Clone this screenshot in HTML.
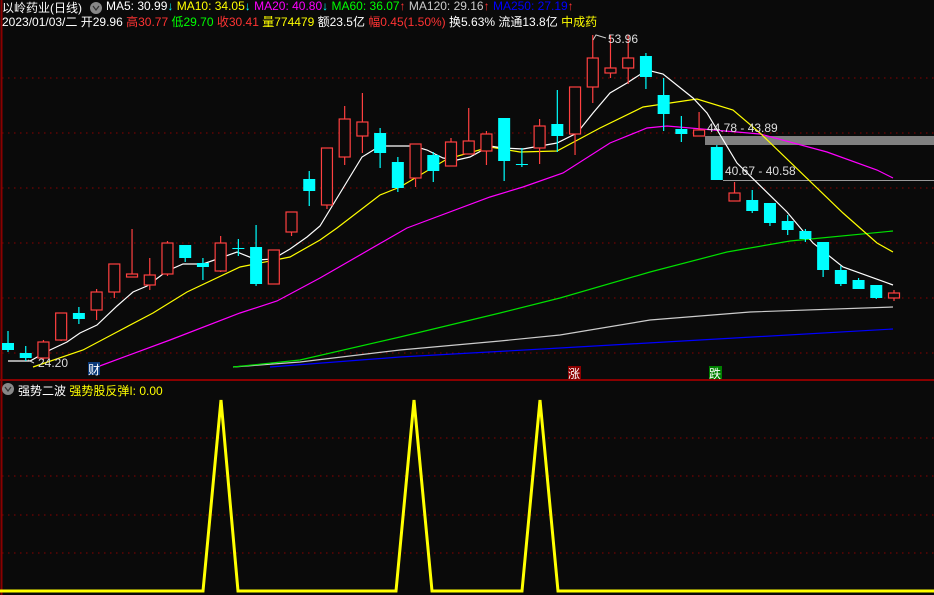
<!DOCTYPE html><html><head><meta charset="utf-8"><style>
body{margin:0;background:#0a0a0a;width:934px;height:595px;overflow:hidden;font-family:"Liberation Sans","Noto Sans CJK SC",sans-serif}
svg{position:absolute;left:0;top:0}
.t{position:absolute;font-size:12px;white-space:nowrap;color:#ddd}
</style></head><body>
<svg width="934" height="595">
<rect width="934" height="595" fill="#0a0a0a"/>
<line x1="1.5" y1="0" x2="1.5" y2="595" stroke="#8b0000" stroke-width="2"/>
<g stroke="#8b0000" stroke-dasharray="1.5,4.5">
<line x1="2" y1="78" x2="934" y2="78"/><line x1="2" y1="133" x2="934" y2="133"/><line x1="2" y1="188" x2="934" y2="188"/><line x1="2" y1="243" x2="934" y2="243"/><line x1="2" y1="298" x2="934" y2="298"/><line x1="2" y1="353" x2="934" y2="353"/>
<line x1="2" y1="438" x2="934" y2="438"/><line x1="2" y1="476" x2="934" y2="476"/><line x1="2" y1="515" x2="934" y2="515"/><line x1="2" y1="553" x2="934" y2="553"/>
</g>
<line x1="0" y1="380" x2="934" y2="380" stroke="#8b0000" stroke-width="2"/>
<rect x="705" y="136" width="229" height="9" fill="#808080"/>
<line x1="723" y1="180.5" x2="934" y2="180.5" stroke="#999"/>
<g fill="none" stroke-width="1.2">
<polyline stroke="#0000ff" points="270,367 400,357 560,348 700,340 893,329"/>
<polyline stroke="#ccc" points="233,367 300,362 400,350 500,341 560,335 650,320 750,312 893,307"/>
<polyline stroke="#00e000" points="233,367 300,360 400,337 500,313 560,298 650,272 727,252 790,241 893,231"/>
<polyline stroke="#ff00ff" points="97,367 170,340 240,313 277,301 320,278 407,228 490,197 523,187 563,173 610,143 647,128 667,126 760,134 827,152 877,170 893,178"/>
<polyline stroke="#ffff00" points="33,367 83,350 117,332 153,313 187,292 240,267 290,257 320,240 337,228 380,195 400,187 447,159 490,147 520,152 557,151 600,128 643,107 697,99 733,110 760,133 843,213 877,243 893,252"/>
<polyline stroke="#fff" points="8,361 30,361 50,350 67,342 80,333 97,325 117,306 133,292 147,286 167,271 183,264 203,264 223,257 237,252 257,260 273,259 290,249 307,237 320,226 362,157 380,146 413,146 427,150 443,158 457,160 470,157 490,146 503,148 523,149 557,143 577,133 593,113 610,93 627,83 647,70 663,74 693,98 707,113 737,163 787,212 813,243 843,267 893,285"/>
</g>
<g id="c" stroke-width="1.2"></g>
<polyline fill="none" stroke="#ffff00" stroke-width="3" points="0,591 203,591 221,400 238,591 396,591 414,400 432,591 522,591 540,400 558,591 934,591"/>
<rect x="88" y="362" width="12" height="13" fill="#0a3a7a"/>
<rect x="568" y="366" width="13" height="13" fill="#8b0000"/>
<rect x="709" y="366" width="13" height="13" fill="#008000"/>
<circle cx="96" cy="8" r="6" fill="#888"/><circle cx="8" cy="389" r="6" fill="#888"/>
<polyline points="93,6 96,10 99,6" fill="none" stroke="#333" stroke-width="1.2"/>
<polyline points="5,387 8,391 11,387" fill="none" stroke="#333" stroke-width="1.2"/>
<polyline points="593,40 596,35 606,38" fill="none" stroke="#ccc"/>
<polyline points="28,360 34,363" fill="none" stroke="#ccc"/>
</svg>
<div class="t" style="left:2px;top:-1px;font-size:12px;color:#fff">以岭药业(日线)</div>
<div class="t" style="left:106px;top:-1px;color:#fff">MA5: 30.99<span style="color:#0ff">↓</span> <span style="color:#ff0">MA10: 34.05<span style="color:#0ff">↓</span></span> <span style="color:#f0f">MA20: 40.80<span style="color:#0ff">↓</span></span> <span style="color:#0f0">MA60: 36.07<span style="color:#f33">↑</span></span> <span style="color:#ccc">MA120: 29.16<span style="color:#f33">↑</span></span> <span style="color:#00f">MA250: 27.19<span style="color:#f33">↑</span></span></div>
<div class="t" style="left:2px;top:13px;color:#fff">2023/01/03/二 开29.96 <span style="color:#f33">高30.77</span> <span style="color:#0f0">低29.70</span> <span style="color:#f33">收30.41</span> <span style="color:#ff0">量774479</span> 额23.5亿 <span style="color:#f33">幅0.45(1.50%)</span> 换5.63% 流通13.8亿 <span style="color:#ff0">中成药</span></div>
<div class="t" style="left:608px;top:32px">53.96</div>
<div class="t" style="left:707px;top:121px">44.78 - 43.89</div>
<div class="t" style="left:725px;top:164px">40.67 - 40.58</div>
<div class="t" style="left:38px;top:356px">24.20</div>
<div class="t" style="left:88px;top:361px;color:#fff">财</div>
<div class="t" style="left:568px;top:365px;color:#fff">涨</div>
<div class="t" style="left:709px;top:365px;color:#fff">跌</div>
<div class="t" style="left:18px;top:382px;color:#fff">强势二波 <span style="color:#ff0">强势股反弹I: 0.00</span></div>
<script>
var d=[[1,343,350,331,352],[1,353,358,346,361],[0,342,358,340,360],[0,313,340,313,341],[1,313,319,307,324],[0,292,310,289,320],[0,264,292,264,298],[0,274,277,229,277],[0,275,285,258,290],[0,243,274,241,276],[1,245,258,245,262],[1,263,267,258,280],[0,243,271,236,272],[1,248,248,239,256],[1,247,284,225,286],[0,250,284,250,284],[0,212,232,212,236],[1,179,191,171,206],[0,148,205,148,209],[0,119,157,106,165],[0,122,136,93,153],[1,133,153,128,168],[1,162,188,157,192],[0,144,178,144,187],[1,155,171,152,182],[0,142,166,138,166],[0,141,154,108,154],[0,134,151,131,165],[1,118,161,118,181],[1,164,164,148,167],[0,126,148,119,164],[1,124,136,90,152],[0,87,134,87,155],[0,58,87,35,103],[0,68,73,35,78],[0,58,68,35,84],[1,56,77,53,89],[1,95,114,78,131],[1,129,134,116,142],[0,130,136,112,136],[1,147,180,145,180],[0,193,201,182,201],[1,200,211,190,213],[1,203,223,203,226],[1,221,230,215,235],[1,231,239,229,242],[1,242,270,242,277],[1,270,284,266,286],[1,280,289,278,289],[1,285,298,285,299],[0,293,298,290,301]];
var g=document.getElementById('c'),s='';
d.forEach(function(c,i){var x=8+17.72*i,col=c[0]?'#00ffff':'#ff4040';
s+='<line x1="'+x+'" x2="'+x+'" y1="'+c[3]+'" y2="'+c[4]+'" stroke="'+col+'"/>';
var h=Math.max(c[2]-c[1],1);
if(c[0])s+='<rect x="'+(x-6)+'" y="'+c[1]+'" width="12" height="'+h+'" fill="'+col+'"/>';
else s+='<rect x="'+(x-5.5)+'" y="'+c[1]+'" width="11" height="'+h+'" fill="#0a0a0a" stroke="'+col+'"/>';});
g.innerHTML=s;
</script>
</body></html>
